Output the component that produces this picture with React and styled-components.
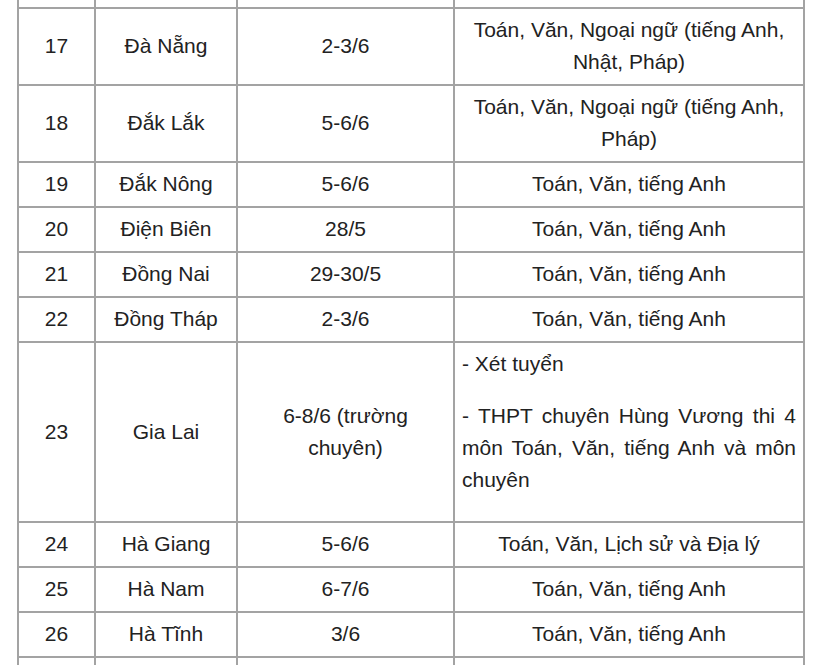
import React from 'react'
import styled, { createGlobalStyle } from "styled-components";

const Global = createGlobalStyle`
  html, body {
    margin: 0;
    padding: 0;
    background: #fff;
    overflow: hidden;
  }
`;

const Page = styled.div`
  width: 820px;
  height: 665px;
  overflow: hidden;
  background: #fff;
  padding-left: 17px;
  box-sizing: border-box;
`;

const Table = styled.table`
  margin-top: -38px;
  width: 788px;
  table-layout: fixed;
  border-collapse: collapse;
  font-family: "Liberation Sans", Arial, sans-serif;
  font-size: 21px;
  line-height: 32px;
  color: #222;
`;

const Row = styled.tr`
  height: ${props => props.h ? props.h + "px" : "auto"};
`;

const Cell = styled.td`
  border: 2px solid #a3a3a3;
  padding: 5px 7px 6px;
  vertical-align: middle;
  text-align: ${props => props.justify ? "justify" : "center"};
`;

const Para = styled.p`
  margin: 0 0 ${props => props.last ? "19px" : "20px"};
`;

const rows = [
  ["17", "Đà Nẵng", "2-3/6", "Toán, Văn, Ngoại ngữ (tiếng Anh, Nhật, Pháp)"],
  ["18", "Đắk Lắk", "5-6/6", "Toán, Văn, Ngoại ngữ (tiếng Anh, Pháp)"],
  ["19", "Đắk Nông", "5-6/6", "Toán, Văn, tiếng Anh"],
  ["20", "Điện Biên", "28/5", "Toán, Văn, tiếng Anh"],
  ["21", "Đồng Nai", "29-30/5", "Toán, Văn, tiếng Anh"],
  ["22", "Đồng Tháp", "2-3/6", "Toán, Văn, tiếng Anh"],
  ["23", "Gia Lai", "6-8/6 (trường chuyên)", null],
  ["24", "Hà Giang", "5-6/6", "Toán, Văn, Lịch sử và Địa lý"],
  ["25", "Hà Nam", "6-7/6", "Toán, Văn, tiếng Anh"],
  ["26", "Hà Tĩnh", "3/6", "Toán, Văn, tiếng Anh"],
];

function App() {
  return (
    <Page>
      <Global />
      <Table>
        <colgroup>
          <col style={{ width: 77 }} />
          <col style={{ width: 142 }} />
          <col style={{ width: 217 }} />
          <col />
        </colgroup>
        <tbody>
          {/* previous row, scrolled out above the top edge */}
          <Row h={45}>
            <Cell />
            <Cell />
            <Cell />
            <Cell />
          </Row>
          {rows.map(([no, name, date, subjects]) => (
            <tr key={no}>
              <Cell>{no}</Cell>
              <Cell>{name}</Cell>
              <Cell>{date}</Cell>
              {subjects ? (
                <Cell>{subjects}</Cell>
              ) : (
                <Cell justify>
                  <Para>- Xét tuyển</Para>
                  <Para last>
                    - THPT chuyên Hùng Vương thi 4 môn Toán, Văn, tiếng Anh và môn chuyên
                  </Para>
                </Cell>
              )}
            </tr>
          ))}
          {/* next row, continues below the bottom edge */}
          <Row h={45}>
            <Cell />
            <Cell />
            <Cell />
            <Cell />
          </Row>
        </tbody>
      </Table>
    </Page>
  );
}

export default App
